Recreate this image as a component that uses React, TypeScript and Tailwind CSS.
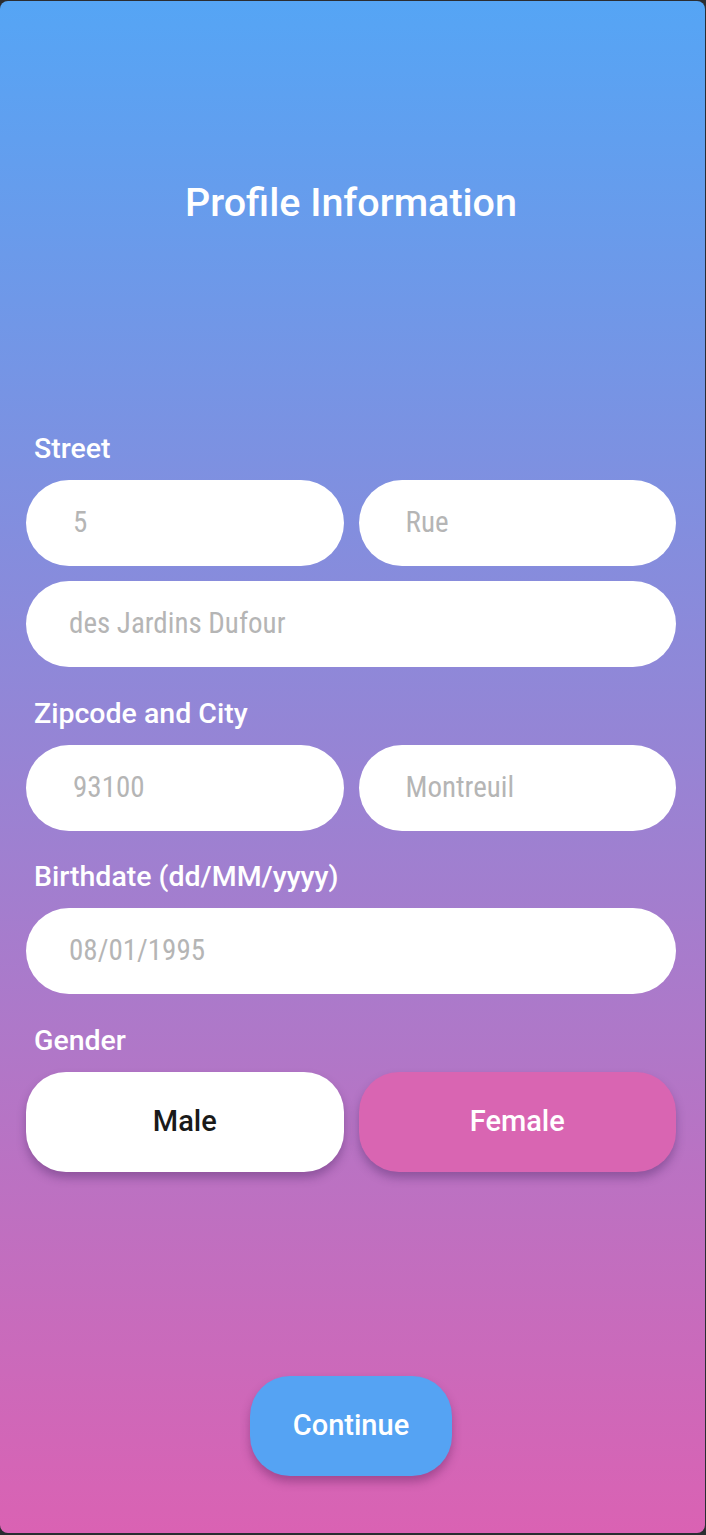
import React from "react"

const inputText = "font-['Roboto',sans-serif] font-stretch-condensed text-[29px] text-[#b5b5b5]"

function Field({ value, wide }: { value: string; wide?: boolean }) {
  return (
    <div
      className={`h-[86px] rounded-full bg-white flex items-center ${wide ? "pl-[43px]" : "pl-[47px]"}`}
    >
      <span className={inputText}>{value}</span>
    </div>
  )
}

function Label({ children, top }: { children: React.ReactNode; top: string }) {
  return (
    <div className={`${top} mb-[16px] pl-[8px] text-[28.5px] leading-[30px] font-medium text-white`}>
      {children}
    </div>
  )
}

export default function App() {
  return (
    <div className="min-h-screen bg-[#2b2d31] pt-px font-['Roboto',sans-serif]">
      <div className="w-[705px] h-[1532px] rounded-lg bg-[linear-gradient(to_bottom,#55a5f5,#da62b3)] flex flex-col pl-[26px] pr-[29px]">
        <h1 className="pt-[181px] text-center text-[39.5px] leading-[42px] font-medium text-white">
          Profile Information
        </h1>

        <Label top="mt-[210px]">Street</Label>
        <div className="grid grid-cols-2 gap-[15px]">
          <Field value="5" />
          <Field value="Rue" />
        </div>
        <div className="mt-[15px]">
          <Field value="des Jardins Dufour" wide />
        </div>

        <Label top="mt-[32px]">Zipcode and City</Label>
        <div className="grid grid-cols-2 gap-[15px]">
          <Field value="93100" />
          <Field value="Montreuil" />
        </div>

        <Label top="mt-[31px]">Birthdate (dd/MM/yyyy)</Label>
        <Field value="08/01/1995" wide />

        <Label top="mt-[32px]">Gender</Label>
        <div className="grid grid-cols-2 gap-[15px]">
          <button className="h-[100px] rounded-[40px] bg-white text-[29px] font-medium text-[#1a1a1a] shadow-[0_6px_10px_rgba(60,30,90,0.35)]">
            Male
          </button>
          <button className="h-[100px] rounded-[40px] bg-[#d965b2] text-[29px] font-medium text-white shadow-[0_6px_10px_rgba(60,30,90,0.35)]">
            Female
          </button>
        </div>

        <div className="mt-[204px] flex justify-center">
          <button className="w-[202px] h-[100px] rounded-[40px] bg-[#55a3f3] text-[29px] font-medium text-white shadow-[0_6px_10px_rgba(90,30,90,0.4)]">
            Continue
          </button>
        </div>
      </div>
    </div>
  )
}
